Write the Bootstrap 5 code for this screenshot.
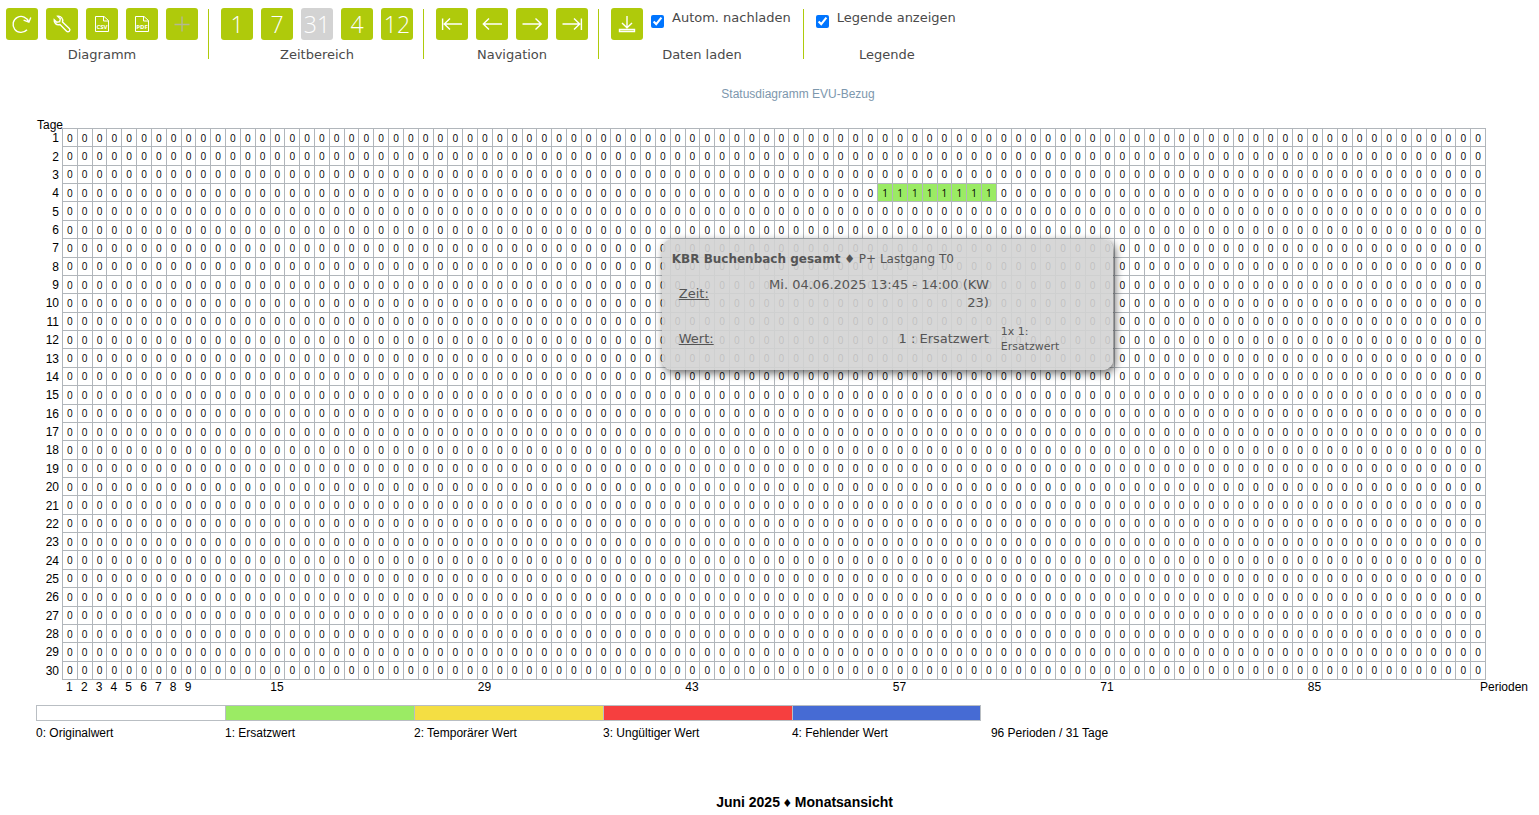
<!DOCTYPE html>
<html lang="de">
<head>
<meta charset="utf-8">
<meta name="viewport" content="width=device-width, initial-scale=1">
<title>Statusdiagramm EVU-Bezug</title>
<link href="https://cdn.jsdelivr.net/npm/bootstrap@5.3.0/dist/css/bootstrap.min.css" rel="stylesheet">
<style>
  body { font-family: "Liberation Sans", Arial, sans-serif; font-size: 12px; line-height: 16px; color: #000; background: #fff; }
  .toolbar { font-family: "DejaVu Sans", Verdana, sans-serif; font-size: 13px; color: #4a4a4a; padding: 8px 6px 6px; }
  .tool-group { padding: 0 10px 0 12px; margin-top: 1px; height: 50px; }
  .tool-group:first-child { padding-left: 0; }
  .tool-group + .tool-group { border-left: 1px solid #afca0b; }
  .tool-row { margin-top: -1px; height: 32px; }
  .tool-btn { width: 32px; height: 32px; padding: 0; border: 0; border-radius: 3px; background: #afca0b; color: #fff;
    font: 350 23px/32px "Open Sans", sans-serif; display: flex; align-items: center; justify-content: center; }
  .tool-btn:disabled { background: #d3d3d3; color: #fff; }
  .tool-btn.btn-plus:disabled { background: #afca0b; color: #b3b893; }
  .tool-btn svg { width: 32px; height: 32px; fill: none; stroke: currentColor; stroke-width: 1.4; }
  .tool-btn svg text { fill: currentColor; stroke: none; font: 700 6px "Open Sans", sans-serif; }
  .tool-label { line-height: 16px; margin-top: 7px; text-align: center; }
  .tool-check { gap: 8px; line-height: 20px; white-space: nowrap; padding-right: 2px; }
  .tool-check input { width: 13px; height: 13px; margin: 7px 0 0; }

  .chart { padding: 0 10px 0 36px; }
  .chart-title { font-size: 12px; line-height: 18px; color: #7d97ad; margin: 0; padding: 20px 0 17px 31px; text-align: center; font-weight: 400; }
  .status-table { display: block; width: 100%; margin: 0; }
  .status-table thead, .status-table tfoot { display: block; }
  .status-table tbody { display: grid; grid-template-rows: repeat(30, 1fr); aspect-ratio: 1493 / 551; border: 0; }
  .status-table tr { display: grid; grid-template-columns: 26px repeat(96, minmax(0, 1fr)) 44px; min-height: 0; }
  .status-table th { font-weight: 400; white-space: nowrap; display: flex; align-items: center; justify-content: center; }
  .status-table thead tr { height: 8px; }
  .status-table thead th { line-height: 8px; justify-content: start; }
  .status-table tbody th { justify-content: end; padding: 2px 3px 0 0; }
  .status-table tbody td { border: solid #b1b6bb; border-width: 1px 0 0 1px; font-size: 10px; line-height: 1;
    font-family: "Open Sans", Tahoma, sans-serif; display: flex; align-items: center; justify-content: center; min-height: 0; }
  .status-table tbody td:last-child { border-right-width: 1px; margin-right: -1px; }
  .status-table tbody tr:last-child td { border-bottom-width: 1px; margin-bottom: -1px; }
  .status-table td.replaced { background: #9beb64; }
  .status-table tfoot { line-height: 14px; }
  .status-table tfoot th:last-child { justify-content: end; }

  .legend-grid { display: grid; grid-template-columns: repeat(5, 1fr) 2.9fr; margin-top: 10px; }
  .swatch { height: 16px; border: 1px solid #b9bec3; border-right: 0; margin-bottom: 4px; }
  .swatch.end { border-right: 1px solid #b9bec3; }
  .s0 { background: #fff; } .s1 { background: #9beb64; } .s2 { background: #f4de43; }
  .s3 { background: #f63f3f; } .s4 { background: #466bd4; }
  .count { padding: 20px 0 0 10px; }
  .period { font-size: 14px; font-weight: 700; line-height: 18px; margin: 52px 0 0; padding-left: 44px; text-align: center; }

  .tip { position: absolute; left: 43%; top: 174px; width: 451px; padding: 10px; border-radius: 10px; background: rgba(211, 211, 211, .9);
    box-shadow: 2px 3px 8px rgba(0, 0, 0, .6); color: #555; font-family: "DejaVu Sans", Verdana, sans-serif; font-size: 13px; line-height: 18px; }
  .tip-head { font-size: 12px; line-height: 20px; margin-bottom: 1px; }
  .tip table { width: 100%; }
  .tip th { width: 60px; font-weight: 400; text-decoration: underline; padding: 6px 7px; }
  .tip td { text-align: right; padding: 6px 6px 6px 24px; }
  .tip td.note { width: 108px; font-size: 11px; line-height: 15px; text-align: left; padding: 6px 36px 6px 6px; }
</style>
</head>
<body>
<header class="toolbar d-flex">
  <section class="tool-group">
    <div class="tool-row d-flex gap-2">
      <button class="tool-btn" type="button" aria-label="Aktualisieren"><svg viewBox="0 0 32 32"><path d="M21 21.800A8 8 0 1 1 22.700 14M17.600 12.200 22.900 14.200 24.800 9.600"/></svg></button>
      <button class="tool-btn" type="button" aria-label="Einstellungen"><svg viewBox="0 0 32 32"><path d="M11.7 8.2 14.3 10.8 13.7 13.7 10.8 14.3 8.2 11.7C7.8 14.8 10.3 17.5 14 16.5L20.6 23.2A1.9 1.9 0 0 0 23.3 20.5L16.5 14C17.5 10.4 14.8 7.8 11.7 8.2Z"/></svg></button>
      <button class="tool-btn" type="button" aria-label="CSV-Export"><svg viewBox="0 0 32 32"><path stroke-width="1" d="M9.500 8.500H18L22.500 12.500V23.500H9.500ZM17.500 8.500V13H22.500"/><text x="16" y="20.500" text-anchor="middle">CSV</text></svg></button>
      <button class="tool-btn" type="button" aria-label="PDF-Export"><svg viewBox="0 0 32 32"><path stroke-width="1" d="M9.500 8.500H18L22.500 12.500V23.500H9.500ZM17.500 8.500V13H22.500"/><text x="16" y="20.500" text-anchor="middle">PDF</text></svg></button>
      <button class="tool-btn btn-plus" type="button" disabled aria-label="Hinzufügen"><svg viewBox="0 0 32 32"><path d="M16 8.500V23.500M8.500 16.500H23.500"/></svg></button>
    </div>
    <div class="tool-label">Diagramm</div>
  </section>
  <section class="tool-group">
    <div class="tool-row d-flex gap-2">
      <button class="tool-btn" type="button">1</button>
      <button class="tool-btn" type="button">7</button>
      <button class="tool-btn" type="button" disabled>31</button>
      <button class="tool-btn" type="button">4</button>
      <button class="tool-btn" type="button">12</button>
    </div>
    <div class="tool-label">Zeitbereich</div>
  </section>
  <section class="tool-group">
    <div class="tool-row d-flex gap-2">
      <button class="tool-btn" type="button" aria-label="Zum Anfang"><svg viewBox="0 0 32 32"><path d="M6.600 10.500V22M26 16H8.500M14 10.500 8.300 16 14 21.500"/></svg></button>
      <button class="tool-btn" type="button" aria-label="Zurück"><svg viewBox="0 0 32 32"><path d="M26 16H7.500M13 10.500 7.300 16 13 21.500"/></svg></button>
      <button class="tool-btn" type="button" aria-label="Weiter"><svg viewBox="0 0 32 32"><path d="M6.500 16H25M19.500 10.500 25.200 16 19.500 21.500"/></svg></button>
      <button class="tool-btn" type="button" aria-label="Zum Ende"><svg viewBox="0 0 32 32"><path d="M25.400 10.500V22M6.500 16H23.500M18 10.500 23.700 16 18 21.500"/></svg></button>
    </div>
    <div class="tool-label">Navigation</div>
  </section>
  <section class="tool-group">
    <div class="tool-row d-flex gap-2">
      <button class="tool-btn" type="button" aria-label="Daten laden"><svg viewBox="0 0 32 32"><path d="M16 8V19.500M11 15 16 19.800 21 15M8.500 21.500H23.500V23.500H8.500Z"/></svg></button>
      <label class="tool-check d-flex align-items-start"><input type="checkbox" checked>Autom. nachladen</label>
    </div>
    <div class="tool-label">Daten laden</div>
  </section>
  <section class="tool-group">
    <div class="tool-row d-flex">
      <label class="tool-check d-flex align-items-start"><input type="checkbox" checked>Legende anzeigen</label>
    </div>
    <div class="tool-label">Legende</div>
  </section>
</header>

<main class="chart position-relative">
  <h1 class="chart-title">Statusdiagramm EVU-Bezug</h1>
  <table class="status-table">
    <thead><tr><th scope="col">Tage</th></tr></thead>
    <tbody id="days"></tbody>
    <tfoot><tr id="periods"></tr></tfoot>
  </table>

  <div class="legend-grid">
    <div><div class="swatch s0"></div>0: Originalwert</div>
    <div><div class="swatch s1"></div>1: Ersatzwert</div>
    <div><div class="swatch s2"></div>2: Temporärer Wert</div>
    <div><div class="swatch s3"></div>3: Ungültiger Wert</div>
    <div><div class="swatch s4 end"></div>4: Fehlender Wert</div>
    <div class="count">96 Perioden / 31 Tage</div>
  </div>
  <h2 class="period">Juni 2025 ♦ Monatsansicht</h2>

  <div class="tip" role="tooltip">
    <div class="tip-head"><b>KBR Buchenbach gesamt</b> ♦ P+ Lastgang T0</div>
    <table>
      <tbody>
        <tr><th scope="row">Zeit:</th><td>Mi. 04.06.2025 13:45 - 14:00 (KW 23)</td><td class="note"></td></tr>
        <tr><th scope="row">Wert:</th><td>1 : Ersatzwert</td><td class="note">1x 1: Ersatzwert</td></tr>
      </tbody>
    </table>
  </div>
</main>

<script>
  const PERIODS = 96, DAYS = 30;
  // Day 4 carries replacement values in periods 56 to 63
  const status = (day, period) => day === 4 && period >= 56 && period <= 63 ? 1 : 0;
  let rows = '';
  for (let d = 1; d <= DAYS; d++) {
    rows += `<tr><th scope="row">${d}</th>`;
    for (let p = 1; p <= PERIODS; p++) {
      const s = status(d, p);
      rows += s ? `<td class="replaced">${s}</td>` : `<td>${s}</td>`;
    }
    rows += '</tr>';
  }
  document.getElementById('days').innerHTML = rows;
  let axis = '<th></th>';
  for (let p = 1; p <= PERIODS; p++) {
    axis += `<th scope="col">${p < 10 || (p < 90 && p % 14 === 1) ? p : ''}</th>`;
  }
  document.getElementById('periods').innerHTML = axis + '<th>Perioden</th>';
</script>
<script src="https://cdn.jsdelivr.net/npm/bootstrap@5.3.0/dist/js/bootstrap.bundle.min.js"></script>
</body>
</html>
